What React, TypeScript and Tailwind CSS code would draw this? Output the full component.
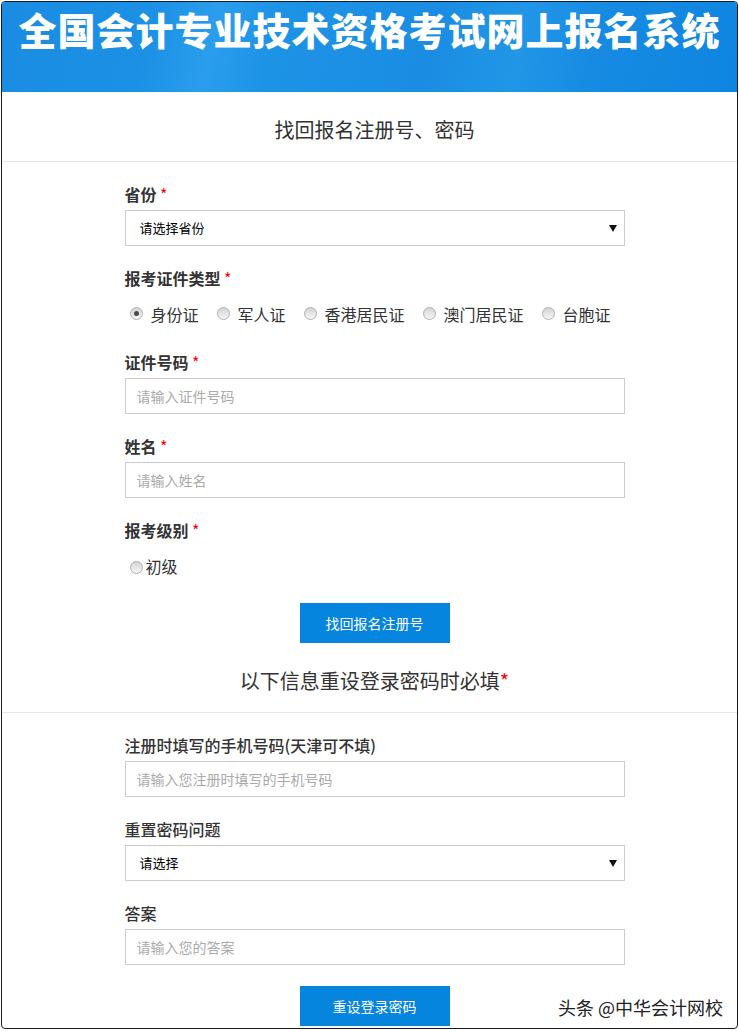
import type { ReactNode } from "react";

const FONT = "font-['Microsoft_YaHei','Noto_Sans_CJK_SC','Noto_Sans',sans-serif]";

const Star = () => <span className="text-[#ff0000] font-normal"> *</span>;

const Label = ({
  children,
  required,
  weight = "font-bold",
}: {
  children: ReactNode;
  required?: boolean;
  weight?: string;
}) => (
  <div className={`h-[22px] mb-[5px] text-[16px] leading-[22px] text-[#333] ${weight}`}>
    {children}
    {required && <Star />}
  </div>
);

const Arrow = () => (
  <svg width="8" height="7" viewBox="0 0 8 7" className="shrink-0">
    <path d="M0 0h8L4 7z" fill="#111" />
  </svg>
);

const FakeSelect = ({ text }: { text: string }) => (
  <div className="h-[36px] border border-[#ccc] bg-white flex items-center justify-between pl-[14px] pr-[7px]">
    <span className="text-[13px] text-black">{text}</span>
    <Arrow />
  </div>
);

const TextInput = ({ placeholder }: { placeholder: string }) => (
  <input
    type="text"
    placeholder={placeholder}
    className="h-[36px] w-full border border-[#ccc] px-[11px] text-[14px] text-[#333] placeholder-[#aaa] outline-none"
  />
);

const Radio = ({ checked }: { checked?: boolean }) => (
  <span className="w-[13px] h-[13px] rounded-full border border-[#b0b0b0] bg-[linear-gradient(180deg,#d4d4d4,#f6f6f6)] flex items-center justify-center shrink-0">
    {checked && <span className="w-[5px] h-[5px] rounded-full bg-[#4a4a4a]" />}
  </span>
);

const SectionTitle = ({ children }: { children: ReactNode }) => (
  <div className="pt-[24px] pb-[17px] pl-[10px] border-b border-[#e8e8e8] text-center text-[20px] leading-[28px] text-[#333]">
    {children}
  </div>
);

const Button = ({ children }: { children: ReactNode }) => (
  <div className="pl-[10px] flex justify-center">
    <button
      type="button"
      className="w-[150px] h-[40px] bg-[#0585de] text-white text-[14px]"
    >
      {children}
    </button>
  </div>
);

const idTypes = ["身份证", "军人证", "香港居民证", "澳门居民证", "台胞证"];

export default function App() {
  return (
    <div className={`w-[739px] h-[1031px] bg-white pt-[1px] px-[1px] ${FONT}`}>
      <div className="relative h-[1028px] border border-[#1a1a1a] rounded-[4px] overflow-hidden bg-white">
        <header className="h-[90px] bg-[linear-gradient(102deg,#1a8de3_0%,#1b90e4_20%,#2a9ded_29%,#1d93e6_37%,#1a8de2_58%,#2196e7_70%,#178be2_80%,#0e85e1_100%)] pt-[7px] text-center">
          <h1 className="text-[38px] leading-[40px] font-black tracking-[1px] text-white">
            全国会计专业技术资格考试网上报名系统
          </h1>
        </header>

        <SectionTitle>找回报名注册号、密码</SectionTitle>

        <div className="pl-[10px] pt-[21px] flex justify-center">
          <div className="w-[500px]">
            <div className="mb-[21px]">
              <Label required>省份</Label>
              <FakeSelect text="请选择省份" />
            </div>

            <div className="mb-[21px]">
              <Label required>报考证件类型</Label>
              <div className="h-[36px] pt-[3px] pl-[5px] flex items-center gap-[18px]">
                {idTypes.map((t, i) => (
                  <label key={t} className="flex items-center gap-[8px] text-[16px] text-[#333]">
                    <Radio checked={i === 0} />
                    {t}
                  </label>
                ))}
              </div>
            </div>

            <div className="mb-[21px]">
              <Label required>证件号码</Label>
              <TextInput placeholder="请输入证件号码" />
            </div>

            <div className="mb-[21px]">
              <Label required>姓名</Label>
              <TextInput placeholder="请输入姓名" />
            </div>

            <div className="mb-[21px]">
              <Label required>报考级别</Label>
              <div className="h-[36px] pt-[3px] pl-[5px] flex items-center">
                <label className="flex items-center gap-[3px] text-[16px] text-[#333]">
                  <span className="pt-[4px]">
                    <Radio />
                  </span>
                  初级
                </label>
              </div>
            </div>
          </div>
        </div>

        <Button>找回报名注册号</Button>

        <SectionTitle>
          以下信息重设登录密码时必填<span className="text-[#ff0000]">*</span>
        </SectionTitle>

        <div className="pl-[10px] pt-[21px] flex justify-center">
          <div className="w-[500px]">
            <div className="mb-[21px]">
              <Label weight="font-medium">注册时填写的手机号码(天津可不填)</Label>
              <TextInput placeholder="请输入您注册时填写的手机号码" />
            </div>

            <div className="mb-[21px]">
              <Label weight="font-medium">重置密码问题</Label>
              <FakeSelect text="请选择" />
            </div>

            <div className="mb-[21px]">
              <Label weight="font-medium">答案</Label>
              <TextInput placeholder="请输入您的答案" />
            </div>
          </div>
        </div>

        <Button>重设登录密码</Button>

        <div className="absolute right-[14px] bottom-[10px] text-[18px] leading-[22px] text-[#222] [text-shadow:0_0_2px_#fff]">
          头条 @中华会计网校
        </div>
      </div>
    </div>
  );
}
